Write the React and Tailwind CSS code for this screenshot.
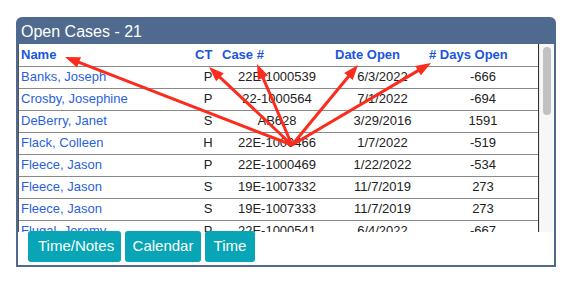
import React from 'react';

const rows = [
  { name: 'Banks, Joseph', ct: 'P', caseNo: '22E-1000539', opened: '6/3/2022', days: '-666' },
  { name: 'Crosby, Josephine', ct: 'P', caseNo: '22-1000564', opened: '7/1/2022', days: '-694' },
  { name: 'DeBerry, Janet', ct: 'S', caseNo: 'AB628', opened: '3/29/2016', days: '1591' },
  { name: 'Flack, Colleen', ct: 'H', caseNo: '22E-1000466', opened: '1/7/2022', days: '-519' },
  { name: 'Fleece, Jason', ct: 'P', caseNo: '22E-1000469', opened: '1/22/2022', days: '-534' },
  { name: 'Fleece, Jason', ct: 'S', caseNo: '19E-1007332', opened: '11/7/2019', days: '273' },
  { name: 'Fleece, Jason', ct: 'S', caseNo: '19E-1007333', opened: '11/7/2019', days: '273' },
  { name: 'Flugal, Jeremy', ct: 'P', caseNo: '22E-1000541', opened: '6/4/2022', days: '-667' },
  { name: 'Gordon, Alan', ct: 'S', caseNo: '21E-1004410', opened: '9/14/2021', days: '-404' },
];

// annotation arrows drawn over the screenshot
const origin = [292, 145];
const tips = [[65, 57], [209, 67], [257, 64], [358, 65], [431, 63]];

const Arrow = ({ tip }) => {
  const [sx, sy] = origin;
  const [tx, ty] = tip;
  const len = Math.hypot(tx - sx, ty - sy);
  const dx = (tx - sx) / len;
  const dy = (ty - sy) / len;
  const bx = tx - dx * 15;
  const by = ty - dy * 15;
  const nx = -dy * 5.5;
  const ny = dx * 5.5;
  return (
    <g>
      <line x1={sx} y1={sy} x2={bx + dx * 2} y2={by + dy * 2} stroke="#fb2b1d" strokeWidth="3" />
      <polygon points={`${tx},${ty} ${bx + nx},${by + ny} ${bx - nx},${by - ny}`} fill="#fb2b1d" />
    </g>
  );
};

export default function App() {
  return (
    <div className="relative w-[574px] h-[284px] bg-white overflow-hidden" style={{ fontFamily: '"Liberation Sans", Arial, sans-serif' }}>
      <div className="ml-[16px] mt-[17px] w-[540px] h-[250px] flex flex-col border-2 border-[#4f6a8e] rounded-t-[6px] bg-white">
        <div className="h-[25px] shrink-0 bg-[#4f6a8e] text-white text-[16px] leading-[25px] pl-[3px]">
          Open Cases - 21
        </div>
        <div className="flex h-[188px] shrink-0">
          <div className="w-[521px] overflow-hidden border-l border-[#555] border-r border-r-[#333]">
            <table className="table-fixed w-[520px] border-collapse text-[13px]">
              <colgroup>
                <col className="w-[175px]" />
                <col className="w-[26px]" />
                <col className="w-[114px]" />
                <col className="w-[91px]" />
                <col className="w-[114px]" />
              </colgroup>
              <thead>
                <tr className="h-[22px] border-b border-[#8a8a8a] text-[#1a55e0] font-bold text-left">
                  <th className="pl-[2px] font-bold">Name</th>
                  <th className="pl-[1px] font-bold">CT</th>
                  <th className="pl-[2px] font-bold">Case #</th>
                  <th className="pl-[1px] font-bold">Date Open</th>
                  <th className="pl-[4px] font-bold">#&nbsp;Days Open</th>
                </tr>
              </thead>
              <tbody>
                {rows.map((r, i) => (
                  <tr key={i} className="h-[22px] border-b border-[#8a8a8a] text-[#222]">
                    <td className="pl-[2px] text-[#2a5fe0] whitespace-nowrap">{r.name}</td>
                    <td className="text-center pl-[2px]">{r.ct}</td>
                    <td className="text-center">{r.caseNo}</td>
                    <td className="text-center pl-[6px]">{r.opened}</td>
                    <td className="text-center pl-[2px]">{r.days}</td>
                  </tr>
                ))}
              </tbody>
            </table>
          </div>
          <div className="w-[15px] bg-[#f7f7f7] border-l border-[#e8e8e8] pt-[3px] flex justify-center">
            <div className="w-[8px] h-[68px] rounded-full bg-[#c1c1c1]" />
          </div>
        </div>
        <div className="flex gap-[4px] pl-[10px] -mt-[1px] h-[31px] text-white text-[15px] relative">
          <button className="px-[10px] rounded-[3px] bg-[#07a5b5] w-[93px]">Time/Notes</button>
          <button className="rounded-[3px] bg-[#07a5b5] w-[76px]">Calendar</button>
          <button className="rounded-[3px] bg-[#07a5b5] w-[50px]">Time</button>
        </div>
      </div>
      <svg className="absolute inset-0 pointer-events-none" width="574" height="284">
        {tips.map((t, i) => <Arrow key={i} tip={t} />)}
      </svg>
    </div>
  );
}
